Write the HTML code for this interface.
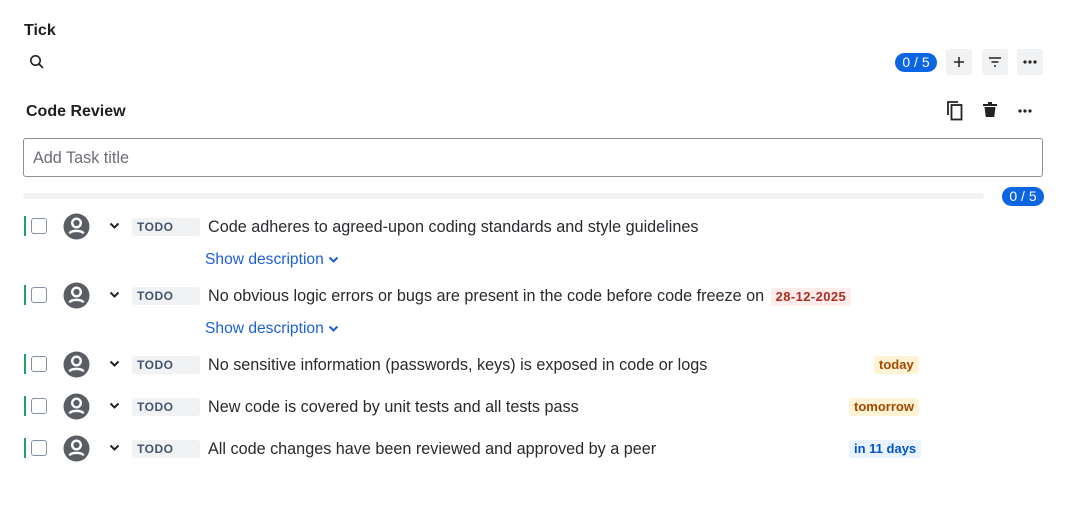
<!DOCTYPE html><html><head><style>
body{margin:0;width:1080px;height:506px;background:#fff;font-family:"Liberation Sans",sans-serif;color:#172b4d;position:relative;overflow:hidden}
.a{position:absolute}
.pill{background:#0c66e4;color:#fff;border-radius:10px;font-size:14px;text-align:center;line-height:19px;height:19px;width:42px}
.btn{width:26px;height:26px;background:#f1f2f4;border-radius:3px;display:flex;align-items:center;justify-content:center}
.row .bar{position:absolute;left:24px;width:2px;height:20px;background:#22a06b}
.cb{position:absolute;left:31px;width:16px;height:16px;border:1.5px solid #8590a2;border-radius:3px;box-sizing:border-box}
.todo{position:absolute;left:132px;width:68px;height:18px;background:#f1f2f4;border-radius:3px;font-size:12px;font-weight:bold;color:#44546f;line-height:18px;padding-left:5px;box-sizing:border-box;letter-spacing:.5px}
.txt{position:absolute;left:208px;font-size:16.2px;color:#292a2e;white-space:nowrap}
.lz{position:absolute;font-size:13px;font-weight:bold;padding:0 5px;height:18px;line-height:18px;border-radius:3px}
.sd{position:absolute;left:205px;color:#1d5fd6;font-size:15.6px}
</style></head><body>
<div class="a" style="left:24px;top:22px;font-size:16px;font-weight:bold;color:#1f1f1f">Tick</div>
<svg class="a" style="left:29px;top:54px" width="16" height="16" viewBox="0 0 16 16"><circle cx="6.5" cy="6.5" r="4.7" fill="none" stroke="#222" stroke-width="1.6"/><path d="M10 10l4 4" stroke="#222" stroke-width="1.7"/></svg>
<div class="a pill" style="left:895px;top:53px">0 / 5</div>
<div class="a btn" style="left:946px;top:49px"><svg width="12" height="12"><path d="M6 1v10M1 6h10" stroke="#222" stroke-width="1.5"/></svg></div>
<div class="a btn" style="left:982px;top:49px"><svg width="14" height="12"><path d="M1 2h12M3.5 6h7M6 10h2" stroke="#222" stroke-width="1.5"/></svg></div>
<div class="a btn" style="left:1017px;top:49px"><svg width="14" height="4"><circle cx="2" cy="2" r="1.6" fill="#222"/><circle cx="7" cy="2" r="1.6" fill="#222"/><circle cx="12" cy="2" r="1.6" fill="#222"/></svg></div>
<div class="a" style="left:26px;top:103px;font-size:16px;font-weight:bold;color:#1f1f1f">Code Review</div>
<svg class="a" style="left:946px;top:100px" width="18" height="21"><path d="M2 15V2h10" fill="none" stroke="#222" stroke-width="1.8"/><rect x="5.5" y="5" width="10" height="14.5" fill="none" stroke="#222" stroke-width="1.8"/></svg>
<svg class="a" style="left:982px;top:102px" width="16" height="16"><path d="M1 3h14M6 1h4" stroke="#222" stroke-width="2"/><path d="M2.5 5h11l-1.3 10H3.8z" fill="#222"/></svg>
<svg class="a" style="left:1018px;top:109px" width="14" height="4"><circle cx="2" cy="2" r="1.6" fill="#222"/><circle cx="7" cy="2" r="1.6" fill="#222"/><circle cx="12" cy="2" r="1.6" fill="#222"/></svg>
<div class="a" style="left:23px;top:138px;width:1020px;height:39px;border:1.5px solid #8c8f97;border-radius:3px;box-sizing:border-box;font-size:16.2px;color:#6b6e76;padding:10px 0 0 9px">Add Task title</div>
<div class="a" style="left:23px;top:193px;width:961px;height:6px;background:#f1f2f4;border-radius:3px"></div>
<div class="a pill" style="left:1002px;top:187px">0 / 5</div>

<div class="a row" style="left:0;top:216px;width:1080px;height:20px"><div class="bar"></div></div>
<div class="a row" style="left:0;top:285px;width:1080px;height:20px"><div class="bar"></div></div>
<div class="a row" style="left:0;top:354px;width:1080px;height:20px"><div class="bar"></div></div>
<div class="a row" style="left:0;top:396px;width:1080px;height:20px"><div class="bar"></div></div>
<div class="a row" style="left:0;top:438px;width:1080px;height:20px"><div class="bar"></div></div>

<div class="cb" style="top:218px"></div><div class="cb" style="top:287px"></div><div class="cb" style="top:356px"></div><div class="cb" style="top:398px"></div><div class="cb" style="top:440px"></div>
<svg class="a" style="left:63px;top:213px" width="27" height="27"><circle cx="13.5" cy="13.5" r="13" fill="#5a5d63"/><circle cx="13.5" cy="10" r="4.3" fill="none" stroke="#fff" stroke-width="2.4"/><path d="M6.5 20.5c1.5-3.5 12.5-3.5 14 0" fill="none" stroke="#fff" stroke-width="2.4"/></svg>
<svg class="a" style="left:63px;top:282px" width="27" height="27"><circle cx="13.5" cy="13.5" r="13" fill="#5a5d63"/><circle cx="13.5" cy="10" r="4.3" fill="none" stroke="#fff" stroke-width="2.4"/><path d="M6.5 20.5c1.5-3.5 12.5-3.5 14 0" fill="none" stroke="#fff" stroke-width="2.4"/></svg>
<svg class="a" style="left:63px;top:351px" width="27" height="27"><circle cx="13.5" cy="13.5" r="13" fill="#5a5d63"/><circle cx="13.5" cy="10" r="4.3" fill="none" stroke="#fff" stroke-width="2.4"/><path d="M6.5 20.5c1.5-3.5 12.5-3.5 14 0" fill="none" stroke="#fff" stroke-width="2.4"/></svg>
<svg class="a" style="left:63px;top:393px" width="27" height="27"><circle cx="13.5" cy="13.5" r="13" fill="#5a5d63"/><circle cx="13.5" cy="10" r="4.3" fill="none" stroke="#fff" stroke-width="2.4"/><path d="M6.5 20.5c1.5-3.5 12.5-3.5 14 0" fill="none" stroke="#fff" stroke-width="2.4"/></svg>
<svg class="a" style="left:63px;top:435px" width="27" height="27"><circle cx="13.5" cy="13.5" r="13" fill="#5a5d63"/><circle cx="13.5" cy="10" r="4.3" fill="none" stroke="#fff" stroke-width="2.4"/><path d="M6.5 20.5c1.5-3.5 12.5-3.5 14 0" fill="none" stroke="#fff" stroke-width="2.4"/></svg>
<svg class="a" style="left:109px;top:222px" width="11" height="8"><path d="M1.5 1.5l4 4 4-4" fill="none" stroke="#222" stroke-width="2"/></svg>
<svg class="a" style="left:109px;top:291px" width="11" height="8"><path d="M1.5 1.5l4 4 4-4" fill="none" stroke="#222" stroke-width="2"/></svg>
<svg class="a" style="left:109px;top:360px" width="11" height="8"><path d="M1.5 1.5l4 4 4-4" fill="none" stroke="#222" stroke-width="2"/></svg>
<svg class="a" style="left:109px;top:402px" width="11" height="8"><path d="M1.5 1.5l4 4 4-4" fill="none" stroke="#222" stroke-width="2"/></svg>
<svg class="a" style="left:109px;top:444px" width="11" height="8"><path d="M1.5 1.5l4 4 4-4" fill="none" stroke="#222" stroke-width="2"/></svg>
<div class="todo" style="top:218px">TODO</div><div class="todo" style="top:287px">TODO</div><div class="todo" style="top:356px">TODO</div><div class="todo" style="top:398px">TODO</div><div class="todo" style="top:440px">TODO</div>
<div class="txt" style="top:218px">Code adheres to agreed-upon coding standards and style guidelines</div>
<div class="txt" style="top:287px">No obvious logic errors or bugs are present in the code before code freeze on <span style="display:inline-block;background:#ffeceb;color:#ae2e24;font-size:13px;font-weight:bold;padding:0 5px;border-radius:3px;line-height:18px;letter-spacing:.4px;margin-left:2px">28-12-2025</span></div>
<div class="txt" style="top:356px">No sensitive information (passwords, keys) is exposed in code or logs</div>
<div class="txt" style="top:398px">New code is covered by unit tests and all tests pass</div>
<div class="txt" style="top:440px">All code changes have been reviewed and approved by a peer</div>
<div class="sd" style="top:251px">Show description <svg width="11" height="8"><path d="M1.5 1.5l4 4 4-4" fill="none" stroke="#1d5fd6" stroke-width="2"/></svg></div>
<div class="sd" style="top:320px">Show description <svg width="11" height="8"><path d="M1.5 1.5l4 4 4-4" fill="none" stroke="#1d5fd6" stroke-width="2"/></svg></div>
<div class="lz" style="left:874px;top:356px;background:#fff3d6;color:#a54800">today</div>
<div class="lz" style="left:849px;top:398px;background:#fff3d6;color:#a54800">tomorrow</div>
<div class="lz" style="left:849px;top:440px;background:#e9f2ff;color:#0055cc">in 11 days</div>
</body></html>
